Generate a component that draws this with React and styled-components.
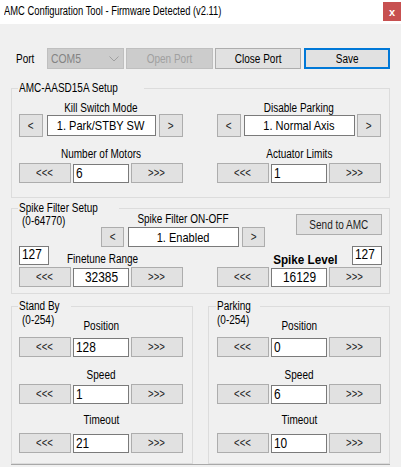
import React from "react";
import styled, { createGlobalStyle } from "styled-components";

const font = `"Liberation Sans", Arial, sans-serif`;

const GlobalStyle = createGlobalStyle`
  html, body {
    margin: 0;
    padding: 0;
    background: #f0f0f0;
    overflow: hidden;
  }
  * {
    box-sizing: border-box;
  }
`;

// the screenshot's UI font is tall and narrow, so text is squeezed horizontally
const Txt = styled.span`
  display: inline-block;
  white-space: nowrap;
  transform: scaleX(${(p) => p.$sx || 0.8});
  transform-origin: ${(p) => p.$origin || "center"};
`;

const Window = styled.div`
  width: 401px;
  height: 467px;
  overflow: hidden;
  display: flex;
  flex-direction: column;
  background: #f0f0f0;
  font-family: ${font};
  font-size: 12.5px;
  color: #000;
`;

const TitleBar = styled.div`
  height: 24px;
  flex: none;
  background: #fff;
  display: flex;
  justify-content: space-between;
  align-items: flex-start;
`;

const Title = styled.div`
  padding: 3px 0 0 4px;
  font-size: 12.5px;
  line-height: 16px;
  color: #000;
`;

const CloseButton = styled.div`
  width: 18px;
  height: 19px;
  margin-top: 2px;
  background: #c75050;
  color: #fff;
  font-size: 11px;
  font-weight: bold;
  display: flex;
  align-items: center;
  justify-content: center;
`;

const Content = styled.div`
  padding: 0 11px;
  display: flex;
  flex-direction: column;
  flex: 1;
`;

const PortRow = styled.div`
  margin-top: 24px;
  height: 21px;
  display: flex;
  align-items: center;
  gap: 2px;
`;

const PortLabel = styled.div`
  width: 34px;
  padding-left: 5px;
`;

const Combo = styled.div`
  width: 77px;
  height: 21px;
  background: #cccccc;
  border: 1px solid #bfbfbf;
  display: flex;
  align-items: center;
  justify-content: space-between;
  padding: 0 4px 0 3px;
  color: #838383;
`;

const PortButton = styled.div`
  width: ${(p) => p.$w}px;
  height: 21px;
  margin-left: ${(p) => p.$ml || 0}px;
  display: flex;
  align-items: center;
  justify-content: center;
  background: ${(p) => (p.$disabled ? "#cccccc" : "#e1e1e1")};
  color: ${(p) => (p.$disabled ? "#a0a0a0" : "#000")};
  border: ${(p) =>
    p.$primary
      ? "2px solid #0078d7"
      : p.$disabled
      ? "1px solid #bfbfbf"
      : "1px solid #adadad"};
`;

const Group = styled.fieldset`
  margin: ${(p) => p.$mt || 0}px 0 0 0;
  padding: 0;
  min-width: 0;
  width: ${(p) => (p.$w ? `${p.$w}px` : "auto")};
  border: 1px solid #dcdcdc;
`;

const Legend = styled.legend`
  margin-left: ${(p) => p.$ml}px;
  padding: 0 1px;
  line-height: 13px;
`;

const Inner = styled.div`
  padding: ${(p) => p.$pt || 0}px ${(p) => p.$pr}px ${(p) => p.$pb}px
    ${(p) => p.$pl}px;
`;

const TwoCols = styled.div`
  display: grid;
  grid-template-columns: 164px 164px;
  justify-content: space-between;
  margin-top: ${(p) => p.$mt || 0}px;
`;

const Column = styled.div`
  display: flex;
  flex-direction: column;
`;

const FieldLabel = styled.div`
  line-height: 13px;
  text-align: center;
  white-space: nowrap;
  margin-top: ${(p) => p.$mt || 0}px;
  font-weight: ${(p) => (p.$bold ? "bold" : "normal")};
  font-size: ${(p) => (p.$bold ? "13px" : "12.5px")};
`;

const Hint = styled.div`
  line-height: 13px;
  padding-left: ${(p) => p.$indent || 0}px;
  margin-top: ${(p) => p.$mt || 0}px;
`;

const ControlRow = styled.div`
  height: ${(p) => p.$h}px;
  margin-top: ${(p) => p.$mt || 0}px;
  display: flex;
  align-items: center;
  justify-content: space-between;
`;

const WinButton = styled.div`
  width: ${(p) => p.$w}px;
  height: ${(p) => p.$h}px;
  background: #e1e1e1;
  border: 1px solid #adadad;
  display: flex;
  align-items: center;
  justify-content: center;
  font-size: ${(p) => p.$fs || 12.5}px;
  color: #1e1e1e;
  flex: none;
`;

const TextBox = styled.div`
  width: ${(p) => p.$w}px;
  height: ${(p) => p.$h}px;
  background: #fff;
  border: 1px solid #7a7a7a;
  display: flex;
  align-items: ${(p) => (p.$top ? "flex-start" : "center")};
  justify-content: ${(p) => (p.$center ? "center" : "flex-start")};
  padding: 0 2px;
  font-size: ${(p) => (p.$text ? 13 : 14)}px;
  line-height: 15px;
  overflow: hidden;
  flex: none;
`;

const HeaderCell = styled.div`
  display: grid;
  height: ${(p) => p.$h}px;
  & > * {
    grid-area: 1 / 1;
  }
`;

const CornerHint = styled(Hint)`
  justify-self: start;
  align-self: start;
`;

const HeaderLabel = styled(FieldLabel)`
  justify-self: center;
  align-self: end;
`;

const SpikeTop = styled.div`
  display: grid;
  grid-template-columns: 82px 164px 1fr;
  margin-top: -2px;
  height: 34px;
`;

const SpikeMid = styled.div`
  display: grid;
  grid-template-columns: 164px 164px;
  justify-content: space-between;
  height: 20px;
  margin-top: -1px;
`;

const MidCell = styled.div`
  display: flex;
  justify-content: ${(p) => (p.$end ? "flex-end" : "flex-start")};
  margin-right: ${(p) => (p.$end ? -1 : 0)}px;
`;

const MidLabel = styled(FieldLabel)`
  align-self: flex-end;
  margin-left: ${(p) => p.$ml || 0}px;
  margin-right: ${(p) => p.$mr || 0}px;
`;

const SendButton = styled(WinButton)`
  justify-self: end;
  margin-top: 1px;
  margin-right: -1px;
`;

const BottomRow = styled.div`
  display: flex;
  gap: 15px;
  margin-top: 6px;
`;

const Footer = styled.div`
  flex: 1;
  border-top: 1px solid #a8a8a8;
`;

const Chevron = () => (
  <svg width="10" height="6" viewBox="0 0 10 6">
    <polyline points="0.5,0.5 5,5 9.5,0.5" fill="none" stroke="#a0a0a0" strokeWidth="1" />
  </svg>
);

const Selector = ({ value, boxW, btnW = 24, h = 23, boxH = 21, mt }) => (
  <ControlRow $h={h} $mt={mt}>
    <WinButton $w={btnW} $h={h}>
      <Txt>&lt;</Txt>
    </WinButton>
    <TextBox $w={boxW} $h={boxH} $center $text>
      <Txt $sx={0.85}>{value}</Txt>
    </TextBox>
    <WinButton $w={btnW} $h={h}>
      <Txt>&gt;</Txt>
    </WinButton>
  </ControlRow>
);

const Stepper = ({ value, center, mt }) => (
  <ControlRow $h={20} $mt={mt}>
    <WinButton $w={52} $h={20} $fs={12}>
      <Txt>&lt;&lt;&lt;</Txt>
    </WinButton>
    <TextBox $w={56} $h={19} $center={center}>
      <Txt $sx={0.85} $origin={center ? "center" : "left"}>
        {value}
      </Txt>
    </TextBox>
    <WinButton $w={52} $h={20} $fs={12}>
      <Txt>&gt;&gt;&gt;</Txt>
    </WinButton>
  </ControlRow>
);

const MotionGroup = ({ title, legendMl, pl, pr, indent, values }) => (
  <Group $w={182}>
    <Legend $ml={legendMl}>
      <Txt $origin="left">{title}</Txt>
    </Legend>
    <Inner $pl={pl} $pr={pr} $pb={10}>
      <HeaderCell $h={20}>
        <CornerHint $indent={indent} $mt={1}>
          <Txt $origin="left">(0-254)</Txt>
        </CornerHint>
        <HeaderLabel>
          <Txt>Position</Txt>
        </HeaderLabel>
      </HeaderCell>
      <Stepper value={values[0]} mt={4} />
      <FieldLabel $mt={12}>
        <Txt>Speed</Txt>
      </FieldLabel>
      <Stepper value={values[1]} mt={2} />
      <FieldLabel $mt={10}>
        <Txt>Timeout</Txt>
      </FieldLabel>
      <Stepper value={values[2]} mt={6} />
    </Inner>
  </Group>
);

export default function App() {
  return (
    <Window>
      <GlobalStyle />
      <TitleBar>
        <Title>
          <Txt $sx={0.75} $origin="left">
            AMC Configuration Tool - Firmware Detected (v2.11)
          </Txt>
        </Title>
        <CloseButton>x</CloseButton>
      </TitleBar>
      <Content>
        <PortRow>
          <PortLabel>
            <Txt $origin="left">Port</Txt>
          </PortLabel>
          <Combo>
            <Txt $sx={0.83} $origin="left">
              COM5
            </Txt>
            <Chevron />
          </Combo>
          <PortButton $w={87} $disabled>
            <Txt>Open Port</Txt>
          </PortButton>
          <PortButton $w={86}>
            <Txt>Close Port</Txt>
          </PortButton>
          <PortButton $w={86} $ml={1} $primary>
            <Txt>Save</Txt>
          </PortButton>
        </PortRow>

        <Group $mt={13}>
          <Legend $ml={6}>
            <Txt $origin="left">AMC-AASD15A Setup</Txt>
          </Legend>
          <Inner $pt={7} $pl={7} $pr={8} $pb={14}>
            <TwoCols>
              <Column>
                <FieldLabel>
                  <Txt>Kill Switch Mode</Txt>
                </FieldLabel>
                <Selector value="1. Park/STBY SW" boxW={109} mt={-1} />
                <FieldLabel $mt={11}>
                  <Txt>Number of Motors</Txt>
                </FieldLabel>
                <Stepper value="6" mt={2} />
              </Column>
              <Column>
                <FieldLabel>
                  <Txt>Disable Parking</Txt>
                </FieldLabel>
                <Selector value="1. Normal Axis" boxW={111} mt={-1} />
                <FieldLabel $mt={11}>
                  <Txt>Actuator Limits</Txt>
                </FieldLabel>
                <Stepper value="1" mt={2} />
              </Column>
            </TwoCols>
          </Inner>
        </Group>

        <Group $mt={4}>
          <Legend $ml={6}>
            <Txt $origin="left">Spike Filter Setup</Txt>
          </Legend>
          <Inner $pl={7} $pr={8} $pb={6}>
            <SpikeTop>
              <Hint $indent={3} $mt={2}>
                <Txt $origin="left">(0-64770)</Txt>
              </Hint>
              <Column>
                <FieldLabel>
                  <Txt>Spike Filter ON-OFF</Txt>
                </FieldLabel>
                <Selector value="1. Enabled" boxW={111} btnW={23} h={20} boxH={20} mt={1} />
              </Column>
              <SendButton $w={86} $h={21}>
                <Txt>Send to AMC</Txt>
              </SendButton>
            </SpikeTop>
            <SpikeMid>
              <MidCell>
                <TextBox $w={30} $h={19} $top>
                  <Txt $sx={0.85} $origin="left">
                    127
                  </Txt>
                </TextBox>
                <MidLabel $ml={18}>
                  <Txt $origin="left">Finetune Range</Txt>
                </MidLabel>
              </MidCell>
              <MidCell $end>
                <MidLabel $bold $mr={14}>
                  <Txt $sx={0.9} $origin="right">
                    Spike Level
                  </Txt>
                </MidLabel>
                <TextBox $w={30} $h={19} $top>
                  <Txt $sx={0.85} $origin="left">
                    127
                  </Txt>
                </TextBox>
              </MidCell>
            </SpikeMid>
            <TwoCols $mt={1}>
              <Stepper value="32385" center />
              <Stepper value="16129" center />
            </TwoCols>
          </Inner>
        </Group>

        <BottomRow>
          <MotionGroup
            title="Stand By"
            legendMl={6}
            pl={7}
            pr={9}
            indent={3}
            values={["128", "1", "21"]}
          />
          <MotionGroup
            title="Parking"
            legendMl={7}
            pl={8}
            pr={8}
            indent={0}
            values={["0", "6", "10"]}
          />
        </BottomRow>
        <Footer />
      </Content>
    </Window>
  );
}
